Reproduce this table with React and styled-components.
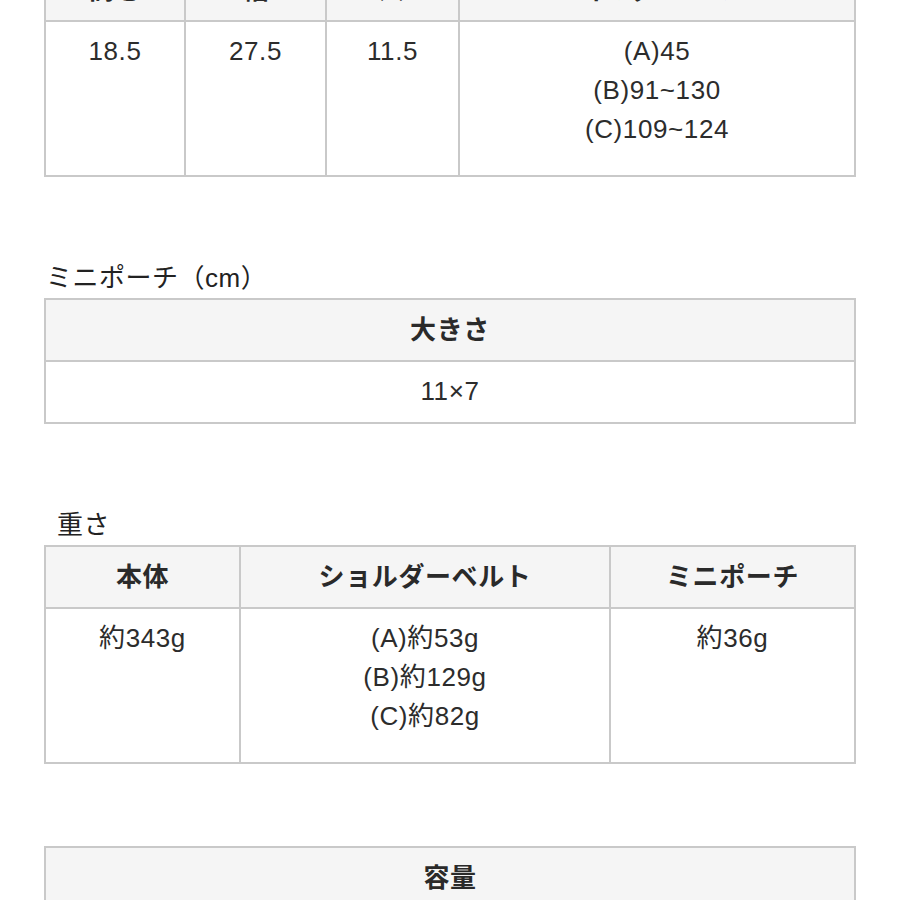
import React from "react";
import styled, { createGlobalStyle } from "styled-components";

const GlobalStyle = createGlobalStyle`
  html, body {
    margin: 0;
    padding: 0;
    background: #ffffff;
  }
  body {
    font-family: "Liberation Sans", "Noto Sans CJK JP", sans-serif;
    color: #2c2c2c;
    overflow: hidden;
  }
`;

const Page = styled.main`
  padding: 0 46px 40px 44px;
  margin-top: -42px;
`;

const Section = styled.section`
  & + & {
    margin-top: 82px;
  }
`;

const Title = styled.h2`
  margin: 0;
  padding-left: ${(p) => p.$indent || 0}px;
  font-size: 26px;
  line-height: 39px;
  font-weight: 400;
  letter-spacing: 0.5px;
  color: #222;
`;

const Table = styled.table`
  width: 100%;
  border-collapse: collapse;
  table-layout: fixed;
  font-size: 26px;
  line-height: 39px;
  letter-spacing: 0.6px;
`;

const HeadCell = styled.th`
  border: 2px solid #c9c9c9;
  background: #f5f5f5;
  font-weight: 700;
  color: #2a2a2a;
  text-align: center;
  vertical-align: top;
  padding: 11px 6px 10px;
`;

const Cell = styled.td`
  border: 2px solid #c9c9c9;
  background: #ffffff;
  text-align: center;
  vertical-align: top;
  padding: 10px 6px 11px;
`;

const Lines = styled.div`
  padding-bottom: ${(p) => (p.$tall ? 15 : 0)}px;
`;

const Line = styled.div``;

function DataTable({ widths, head, rows, tall }) {
  return (
    <Table>
      <colgroup>
        {widths.map((w, i) => (
          <col key={i} style={{ width: w }} />
        ))}
      </colgroup>
      <thead>
        <tr>
          {head.map((h, i) => (
            <HeadCell key={i}>{h}</HeadCell>
          ))}
        </tr>
      </thead>
      {rows && (
        <tbody>
          {rows.map((r, ri) => (
            <tr key={ri}>
              {r.map((c, ci) => (
                <Cell key={ci}>
                  <Lines $tall={tall}>
                    {(Array.isArray(c) ? c : [c]).map((l, li) => (
                      <Line key={li}>{l}</Line>
                    ))}
                  </Lines>
                </Cell>
              ))}
            </tr>
          ))}
        </tbody>
      )}
    </Table>
  );
}

export default function App() {
  return (
    <>
      <GlobalStyle />
      <Page>
        <Section>
          <DataTable
            widths={[140, 141, 133, 396]}
            head={["高さ", "幅", "マチ", "ショルダーベルト"]}
            rows={[["18.5", "27.5", "11.5", ["(A)45", "(B)91~130", "(C)109~124"]]]}
            tall
          />
        </Section>
        <Section>
          <Title $indent={2}>ミニポーチ（cm）</Title>
          <DataTable widths={[810]} head={["大きさ"]} rows={[["11×7"]]} />
        </Section>
        <Section>
          <Title $indent={13}>重さ</Title>
          <DataTable
            widths={[195, 370, 245]}
            head={["本体", "ショルダーベルト", "ミニポーチ"]}
            rows={[["約343g", ["(A)約53g", "(B)約129g", "(C)約82g"], "約36g"]]}
            tall
          />
        </Section>
        <Section>
          <DataTable widths={[810]} head={["容量"]} />
        </Section>
      </Page>
    </>
  );
}
